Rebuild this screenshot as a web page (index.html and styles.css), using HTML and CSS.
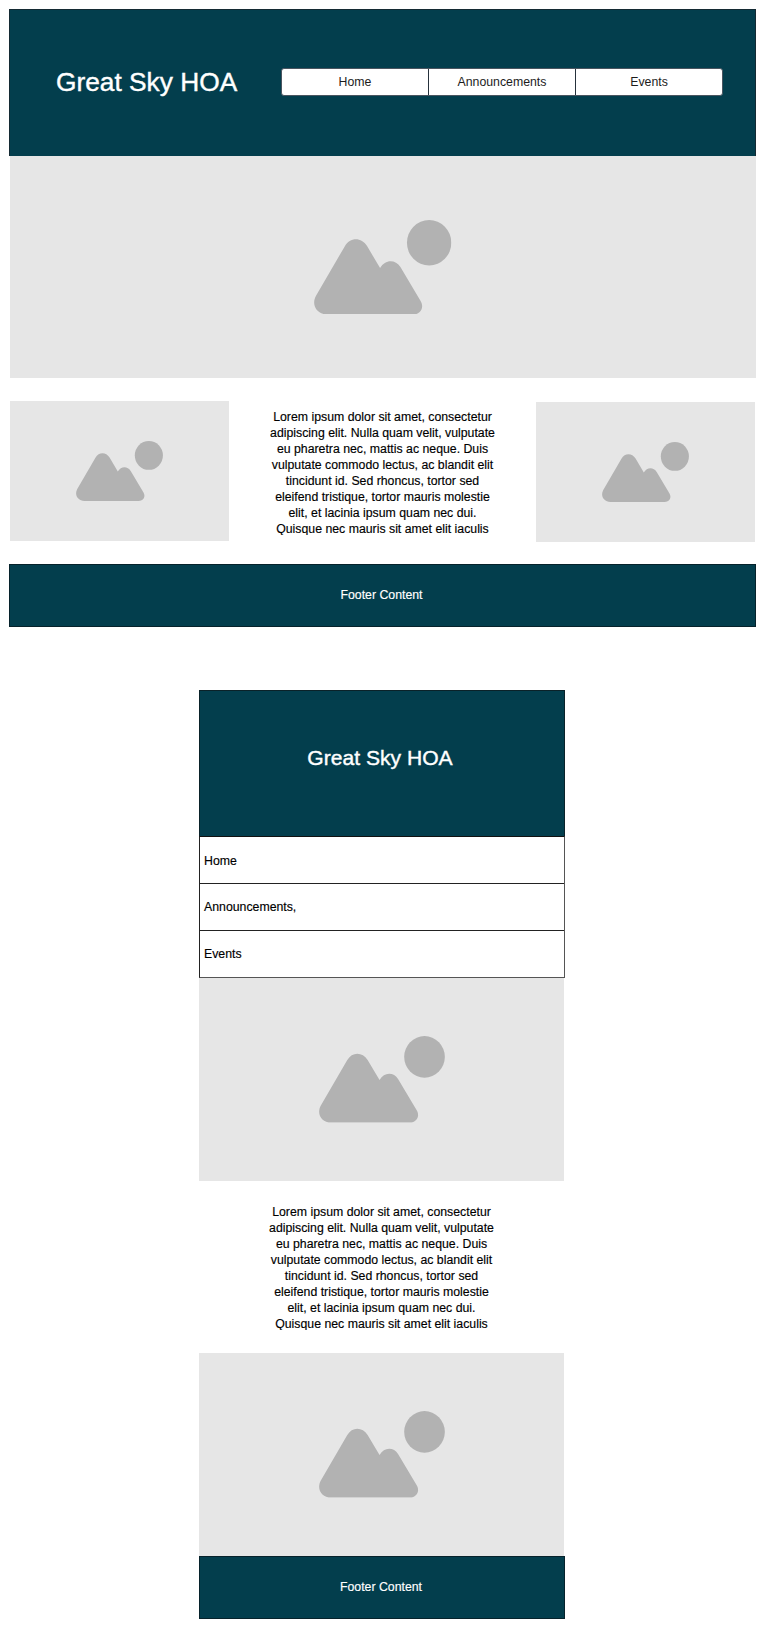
FILE: index.html
```html
<!DOCTYPE html>
<html lang="en">
<head>
<meta charset="utf-8">
<title>Great Sky HOA</title>
<link rel="stylesheet" href="styles.css">
</head>
<body>
<svg class="defs" width="0" height="0" aria-hidden="true">
  <symbol id="picture" viewBox="0 0 412 283">
    <path d="M40 283C8 283-9 254 6 227L92 79C108 51 142 51 159 78L198 144C213 117 244 117 259 141L319 242C332 263 318 283 298 283Z"/>
    <ellipse cx="345" cy="68" rx="66.5" ry="68"/>
  </symbol>
</svg>

<section class="desktop">
  <header class="banner">
    <h1 class="title">Great Sky HOA</h1>
    <nav class="tabs">
      <a class="tab">Home</a>
      <a class="tab">Announcements</a>
      <a class="tab">Events</a>
    </nav>
  </header>
  <div class="image hero"><svg class="icon"><use href="#picture"/></svg></div>
  <div class="columns">
    <div class="image side"><svg class="icon"><use href="#picture"/></svg></div>
    <p class="copy">Lorem ipsum dolor sit amet, consectetur<br>adipiscing elit. Nulla quam velit, vulputate<br>eu pharetra nec, mattis ac neque. Duis<br>vulputate commodo lectus, ac blandit elit<br>tincidunt id. Sed rhoncus, tortor sed<br>eleifend tristique, tortor mauris molestie<br>elit, et lacinia ipsum quam nec dui.<br>Quisque nec mauris sit amet elit iaculis</p>
    <div class="image side side-right"><svg class="icon"><use href="#picture"/></svg></div>
  </div>
  <footer class="footer">Footer Content</footer>
</section>

<section class="mobile">
  <header class="mobile-banner">
    <h1 class="title">Great Sky HOA</h1>
  </header>
  <nav class="menu">
    <a class="menu-item">Home</a>
    <a class="menu-item">Announcements,</a>
    <a class="menu-item">Events</a>
  </nav>
  <div class="image"><svg class="icon"><use href="#picture"/></svg></div>
  <p class="copy">Lorem ipsum dolor sit amet, consectetur<br>adipiscing elit. Nulla quam velit, vulputate<br>eu pharetra nec, mattis ac neque. Duis<br>vulputate commodo lectus, ac blandit elit<br>tincidunt id. Sed rhoncus, tortor sed<br>eleifend tristique, tortor mauris molestie<br>elit, et lacinia ipsum quam nec dui.<br>Quisque nec mauris sit amet elit iaculis</p>
  <div class="image"><svg class="icon"><use href="#picture"/></svg></div>
  <footer class="footer">Footer Content</footer>
</section>
</body>
</html>
```
FILE: styles.css
```css
* { box-sizing: border-box; }

body {
  margin: 0;
  padding-top: 9px;
  height: 1628px;
  background: #fff;
  color: #000;
  font: 12.3px/16px "Liberation Sans", Arial, sans-serif;
  -webkit-text-stroke: 0.15px currentColor;
}

.defs { position: absolute; }

.desktop {
  width: 747px;
  margin-left: 9px;
}

.banner {
  display: flex;
  align-items: center;
  height: 147px;
  padding: 0 32px 2px 46px;
  background: #033e4d;
  border: 1px solid #142a33;
  border-bottom: 0;
}

.title {
  margin: 0;
  color: #fff;
  font-size: 26.3px;
  font-weight: 400;
  line-height: 32px;
  white-space: nowrap;
  -webkit-text-stroke: 0.4px currentColor;
}

.tabs {
  display: flex;
  width: 442px;
  height: 28px;
  margin-left: auto;
  border: 1px solid #4a5560;
  border-radius: 3px;
  background: #fff;
  overflow: hidden;
}

.tab {
  flex: 1;
  color: #1c1c1c;
  line-height: 27px;
  text-align: center;
  -webkit-text-stroke: 0;
}

.tab + .tab { border-left: 1px solid #26323c; }

.image {
  display: flex;
  align-items: center;
  justify-content: center;
  background: #e6e6e6;
}

.icon {
  display: block;
  fill: #b2b2b2;
  -webkit-text-stroke: 0;
}

.hero {
  height: 222px;
  margin-left: 1px;
}

.hero .icon { width: 137.5px; height: 94.5px; }

.columns {
  display: flex;
  justify-content: space-between;
  align-items: flex-start;
  padding: 23px 1px 0 1px;
  height: 186px;
}

.side {
  width: 219.3px;
  height: 140px;
}

.side-right { margin-top: 1px; }

.side .icon { width: 87px; height: 60px; }

.copy {
  margin: 0;
  text-align: center;
  white-space: nowrap;
  overflow: hidden;
  height: 126px;
}

.columns .copy { margin-top: 8px; }

.footer {
  display: flex;
  align-items: center;
  justify-content: center;
  height: 63px;
  padding: 0 2px 1px 0;
  background: #033e4d;
  border: 1px solid #06222b;
  color: #fff;
}

.mobile {
  width: 366px;
  margin: 63px 0 0 199px;
}

.mobile-banner {
  display: flex;
  align-items: center;
  justify-content: center;
  height: 146px;
  padding: 0 4px 11px 0;
  background: #033e4d;
  border: 1px solid #0a2229;
  border-bottom: 0;
}

.mobile-banner .title { font-size: 21.1px; }

.menu {
  border: 1px solid #555;
  border-top-color: #111;
  border-left-color: #222;
}

.menu-item {
  display: block;
  height: 46px;
  padding-left: 4px;
  line-height: 48px;
}

.menu-item + .menu-item {
  height: 47px;
  border-top: 1px solid #222;
  line-height: 46px;
}

.mobile .image {
  height: 203px;
  margin-right: 1px;
}

.mobile .icon { width: 126px; height: 86.7px; }

.mobile .copy { margin: 23px 1px 23px 0; }
```
